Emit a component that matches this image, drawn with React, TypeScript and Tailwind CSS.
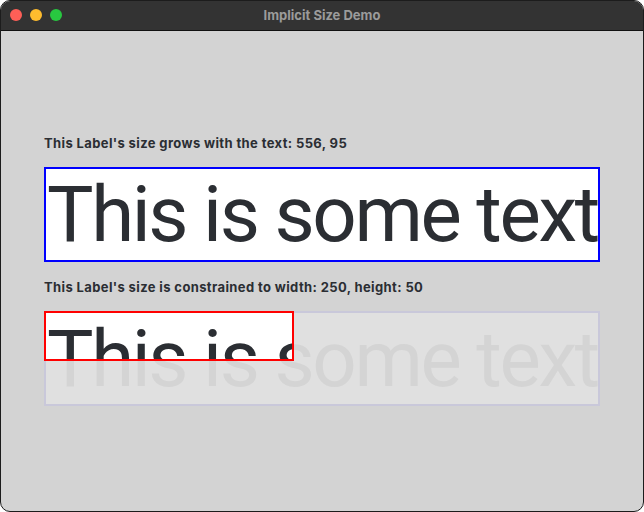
import React from "react";

const BIG = "This is some text";

export default function App() {
  return (
    <div className="w-[644px] h-[512px] bg-white">
      <div className="w-[644px] h-[512px] rounded-[10px] border border-[#1c1c1c] overflow-hidden bg-[#d3d3d3] flex flex-col" style={{ fontFamily: "Inter, 'Noto Sans', sans-serif" }}>
        <div className="h-[30px] shrink-0 bg-[#333333] border-b border-[#111111] relative flex items-center justify-center">
          <div className="absolute left-[9px] top-[8px] flex gap-[8px]">
            <div className="w-[12px] h-[12px] rounded-full bg-[#fe5f57]" />
            <div className="w-[12px] h-[12px] rounded-full bg-[#febc2e]" />
            <div className="w-[12px] h-[12px] rounded-full bg-[#28c840]" />
          </div>
          <span className="text-[13px] font-bold text-[#9b9b9b]">Implicit Size Demo</span>
        </div>
        <div className="flex flex-col pl-[43px] pt-[104px]">
          <div className="h-[16px] leading-[16px] text-[13px] font-bold tracking-[0.38px] text-[#2b2e33]">
            This Label's size grows with the text: 556, 95
          </div>
          <div className="mt-[16px] w-[556px] h-[95px] bg-white border-2 border-[#0000ff] overflow-hidden">
            <div className="font-['Roboto',sans-serif] text-[78px] leading-[91px] tracking-[-2.4px] text-[#2b2e33] pl-[1px] whitespace-nowrap">{BIG}</div>
          </div>
          <div className="mt-[17px] h-[16px] leading-[16px] text-[13px] font-bold tracking-[0.38px] text-[#2b2e33]">
            This Label's size is constrained to width: 250, height: 50
          </div>
          <div className="mt-[16px] relative w-[556px] h-[95px]">
            <div className="w-[556px] h-[95px] bg-[#e0e0e0] border-2 border-[#c9c8da] overflow-hidden">
              <div className="font-['Roboto',sans-serif] text-[78px] leading-[91px] tracking-[-2.4px] text-[#d4d4d4] pl-[1px] pt-[1px] whitespace-nowrap">{BIG}</div>
            </div>
            <div className="absolute left-0 top-0 w-[250px] h-[50px] bg-white border-2 border-[#ff0000] overflow-hidden">
              <div className="font-['Roboto',sans-serif] text-[78px] leading-[91px] tracking-[-2.4px] text-[#2b2e33] pl-[1px] whitespace-nowrap">{BIG}</div>
            </div>
          </div>
        </div>
      </div>
    </div>
  );
}
